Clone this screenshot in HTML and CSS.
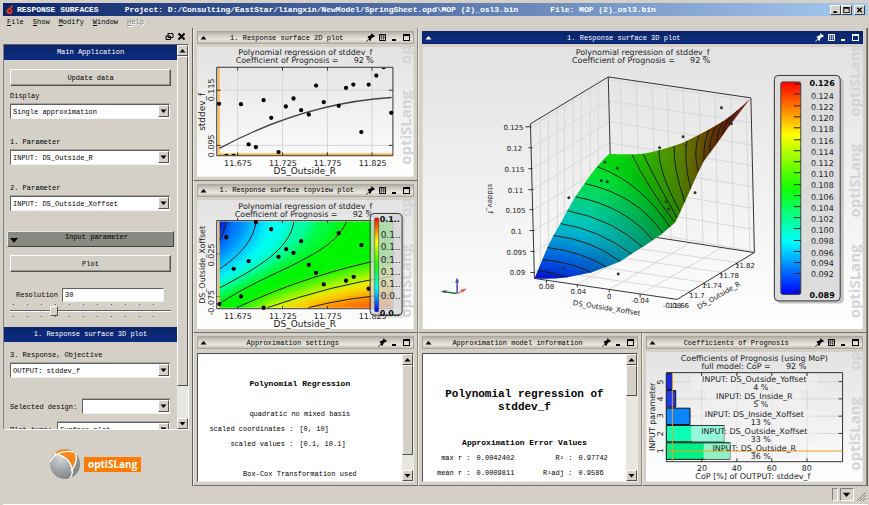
FILE: index.html
```html
<!DOCTYPE html>
<html lang="en">
<head>
<meta charset="utf-8">
<title>RESPONSE SURFACES</title>
<link rel="stylesheet" href="styles.css">
</head>
<body>
<svg class="defs" width="0" height="0" aria-hidden="true">
  <defs>
    <symbol id="pin" viewBox="0 0 9 9"><path d="M5 0l4 3-1 1h-1l-2 2v1l-1 1-1.500-1.500L1 8.500 0 9l.5-1L3 5.500 1.500 4l1-1h1l2-1.500z"/></symbol>
    <symbol id="table" viewBox="0 0 9 9"><path d="M1.500 1.500h6v6h-6z" fill="none" stroke="currentColor"/><path d="M1 3h7M1 5h7M3.500 1v7M5.500 1v7" fill="none" stroke="currentColor" stroke-width=".5"/></symbol>
    <symbol id="min" viewBox="0 0 9 9"><path d="M2 6h4v2H2z"/></symbol>
    <symbol id="max" viewBox="0 0 9 9"><path d="M1 1h7v7H1zM2 3v4h5V3z" fill-rule="evenodd"/></symbol>
    <symbol id="up" viewBox="0 0 9 9"><path d="M1.500 6.500L4.500 3l3 3.500z"/></symbol>
    <symbol id="down" viewBox="0 0 9 9"><path d="M1.500 3h6l-3 3.500z"/></symbol>
    <linearGradient id="paper" x1="0" y1="0" x2="0" y2="1"><stop offset="0" stop-color="#e2e2e2"/><stop offset="1" stop-color="#fff"/></linearGradient>
    <linearGradient id="rainbow" x1="0" y1="0" x2="0" y2="1"><stop offset="0" stop-color="#f00"/><stop offset=".25" stop-color="#ff0"/><stop offset=".5" stop-color="#1f0"/><stop offset=".75" stop-color="#0ff"/><stop offset="1" stop-color="#00f"/></linearGradient>
    <radialGradient id="ball" cx=".35" cy=".3" r=".8"><stop offset="0" stop-color="#d4d6d8"/><stop offset="1" stop-color="#75797d"/></radialGradient>
  </defs>
</svg>

<header class="titlebar">
  <svg class="app-icon" viewBox="0 0 9 11" aria-hidden="true"><path d="M7 0L4 3C1 4 0 6 1 9c2 2 5 2 6-1 1-2 0-4-2-4l3-2z" fill="#e03a20"/><path d="M3 5h2v3H3z" fill="#7a1010"/></svg>
  <h1>RESPONSE SURFACES</h1>
  <span class="project">Project: D:/Consulting/EastStar/liangxin/NewModel/SpringSheet.opd\MOP (2)_osl3.bin</span>
  <span class="file">File: MOP (2)_osl3.bin</span>
  <div class="window-buttons">
    <button aria-label="Minimize"><svg viewBox="0 0 9 9"><use href="#min"/></svg></button>
    <button aria-label="Maximize"><svg viewBox="0 0 9 9"><use href="#max"/></svg></button>
    <button aria-label="Close"><svg viewBox="0 0 9 9"><path d="M2 2l5 5M7 2L2 7" stroke="#000" stroke-width="1.500"/></svg></button>
  </div>
</header>
<nav class="menubar">
  <button><u>F</u>ile</button><button><u>S</u>how</button><button><u>M</u>odify</button><button><u>W</u>indow</button><button disabled><u>H</u>elp</button>
</nav>

<div class="workspace">
  <aside class="sidebar">
    <div class="dock-tools">
      <button aria-label="Float"><svg viewBox="0 0 9 9"><path d="M3 1.500h5v4H3zM1 4h4.500v3.500H1z" fill="#d4d0c8" stroke="#000"/></svg></button>
      <button aria-label="Close panel"><svg viewBox="0 0 9 9"><path d="M1.500 1.500l6 6M7.500 1.500l-6 6" stroke="#000" stroke-width="2"/></svg></button>
    </div>
    <div class="scroller">
      <form class="controls">
        <h2 class="band">Main Application</h2>
        <button type="button" class="push">Update data</button>
        <div class="field"><label for="display">Display</label><span class="combo"><select id="display"><option>Single approximation</option></select><svg viewBox="0 0 9 9"><use href="#down"/></svg></span></div>
        <div class="field"><label for="p1">1. Parameter</label><span class="combo"><select id="p1"><option>INPUT: DS_Outside_R</option></select><svg viewBox="0 0 9 9"><use href="#down"/></svg></span></div>
        <div class="field"><label for="p2">2. Parameter</label><span class="combo"><select id="p2"><option>INPUT: DS_Outside_Xoffset</option></select><svg viewBox="0 0 9 9"><use href="#down"/></svg></span></div>
        <button type="button" class="fold"><svg viewBox="0 0 9 9"><use href="#down"/></svg><span>Input parameter</span></button>
        <button type="button" class="push">Plot</button>
        <div class="resolution"><label for="res">Resolution</label><input id="res" type="text" value="30"></div>
        <div class="slider"><div class="ticks"></div><input type="range" aria-label="Resolution" min="0" max="100" value="26"><div class="ticks"></div></div>
        <h2 class="band second">1. Response surface 3D plot</h2>
        <div class="field response"><label for="resp">3. Response, Objective</label><span class="combo"><select id="resp"><option>OUTPUT: stddev_f</option></select><svg viewBox="0 0 9 9"><use href="#down"/></svg></span></div>
        <div class="inline-field"><label for="design">Selected design:</label><span class="combo"><select id="design"><option></option></select><svg viewBox="0 0 9 9"><use href="#down"/></svg></span></div>
        <div class="inline-field"><label for="ptype">Plot type:</label><span class="combo"><select id="ptype"><option>Surface plot</option></select><svg viewBox="0 0 9 9"><use href="#down"/></svg></span></div>
      </form>
      <div class="scrollbar"><svg viewBox="0 0 9 9"><use href="#up"/></svg><i class="thumb side-thumb"></i><svg viewBox="0 0 9 9"><use href="#down"/></svg></div>
    </div>
    <div class="brand">
      <svg viewBox="0 0 30 30" aria-hidden="true"><circle cx="15" cy="15" r="15" fill="url(#ball)"/><path d="M4 5C9-1 19-1 25 4c3 5 1 12-3 16C20 11 14 6 4 5z" fill="#ff8418"/><path d="M0 13C4 5 12 1 24 3M4 5c10 1 16 6 18 15 1 4 0 7-2 9M25 4c3 7 0 13-4 18" fill="none" stroke="#fff" stroke-width="1.300"/></svg>
      <strong>optiSLang</strong>
    </div>
  </aside>

  <main class="docks">
    <section class="dock">
      <header><svg viewBox="0 0 9 9"><use href="#up"/></svg><h2>1. Response surface 2D plot</h2><span class="tools"><svg viewBox="0 0 9 9"><use href="#pin"/></svg><svg viewBox="0 0 9 9"><use href="#table"/></svg><svg viewBox="0 0 9 9"><use href="#min"/></svg><svg viewBox="0 0 9 9"><use href="#max"/></svg></span></header>
      <svg class="plot" viewBox="197 47 217 130">
        <rect x="197" y="47" width="217" height="130" fill="url(#paper)"/>
        <g class="mark"><text transform="translate(411 165) rotate(-90)">optiSLang</text><text transform="translate(411 64) rotate(-90)">optiSLang</text></g>
        <g transform="translate(190 28) scale(.3333)">
          <path class="grid" d="M143 118v266M278 118v266M413 118v266M547 118v266M80 187h530M80 353h530"/>
          <path d="M86 120v260h524" fill="none" stroke="#ffb84a" stroke-width="6"/>
          <path class="frame" d="M80 118h530v266H80zM143 118v10M278 118v10M413 118v10M547 118v10M143 384v-10M278 384v-10M413 384v-10M547 384v-10M80 187h12M80 353h12M610 187h-12M610 353h-12"/>
          <path d="M88 362Q340 226 606 209" fill="none" stroke="#444" stroke-width="4"/>
          <path class="dots" d="M87 228h0M153 229h0M176 350h0M198 358h0M221 217h0M244 270h0M266 373h0M288 236h0M311 212h0M334 247h0M357 260h0M379 173h0M402 223h0M447 234h0M469 180h0M491 170h0M515 313h0M537 170h0M560 143h0M605 255h0"/>
          <path d="M102 382q7-8 14 0zM124 382q7-8 14 0zM575 120q7 8 14 0z"/>
        </g>
        <g class="head"><text x="305.500" y="55">Polynomial regression of stddev_f</text><text x="305" y="63.500" xml:space="preserve">Coefficient of Prognosis =      92 %</text></g>
        <g class="tick"><text x="238" y="166">11.675</text><text x="283" y="166">11.725</text><text x="328" y="166">11.775</text><text x="373" y="166">11.825</text>
        <text transform="translate(214 90) rotate(-90)">0.115</text><text transform="translate(214 146) rotate(-90)">0.095</text></g>
        <g class="axis"><text x="305" y="174">DS_Outside_R</text><text transform="translate(205 112) rotate(-90)">stddev_f</text></g>
      </svg>
    </section>

    <section class="dock wide active">
      <header><svg viewBox="0 0 9 9"><use href="#up"/></svg><h2>1. Response surface 3D plot</h2><span class="tools"><svg viewBox="0 0 9 9"><use href="#pin"/></svg><svg viewBox="0 0 9 9"><use href="#table"/></svg><svg viewBox="0 0 9 9"><use href="#min"/></svg><svg viewBox="0 0 9 9"><use href="#max"/></svg></span></header>
      <svg class="plot" viewBox="421 47 441 283">
        <defs>
          <clipPath id="sheet"><path d="M533 279L541 260 546 248 552 236 559 224 566 211 574 197 583 184Q596 165 608 154Q628 155 642 154Q660 151 682 143Q705 132 723 121Q738 110 749 99L740 111 727 128 715 145 703 161 696 175 687 195 678 215 674 223 660 235 642 247 631 254 619 262 606 267 590 273 565 278Q550 280 533 279z"/></clipPath>
          <filter id="soft" x="-20%" y="-20%" width="140%" height="140%"><feGaussianBlur stdDeviation="4"/></filter>
          <linearGradient id="shade" gradientUnits="userSpaceOnUse" x1="580" y1="180" x2="680" y2="226"><stop offset=".2" stop-color="#000" stop-opacity="0"/><stop offset="1" stop-color="#000" stop-opacity=".36"/></linearGradient>
        </defs>
        <rect x="421" y="47" width="441" height="283" fill="url(#paper)"/>
        <g class="mark"><text transform="translate(859 117) rotate(-90)">optiSLang</text><text transform="translate(859 218) rotate(-90)">optiSLang</text><text transform="translate(859 319) rotate(-90)">optiSLang</text></g>
        <path class="mesh" d="M539 118v157M547 113v157M556 108v157M563 104v156M572 98v157M580 93v157M589 88v157M597 83v156
          M530 127L607 80 750 101M530 148L607 101 751 123M531 169L608 122 751 145M531 190L608 143 752 166M532 210L609 164 752 187M532 231L610 185 753 209M533 252L611 206 753 230M533 273L612 227 753 252
          M619 79l4 154M635 81l4 154M651 83l4 155M666 86l4 154M682 88l4 154M698 90l4 155M714 93l3 154M730 95l3 154M745 97l4 155
          M545 281L624 233M576 285L657 238M608 290L690 243M639 295L721 248M546 271L690 292M561 262L704 283M577 252L721 273M592 243L737 263"/>
        <path d="M529 124L607 77 750 98 753.500 253 676 300 533 279zM607 77L609 156M656 238L753 253M524 127h6M527 148h4M527 169h4M527 190h5M528 210h4M528 231h5M529 252h4M529 273h4M545 281v3M576 285v3M608 290v3M639 295v3M688 293l3 2M703 284l3 2M719 274l3 2M735 264l3 2" fill="none" stroke="#333"/>
        <g clip-path="url(#sheet)">
          <g filter="url(#soft)">
            <path fill="#b03020" d="M480 60h320v280H480z"/>
            <path fill="#982c08" d="M733 114L727 126V340H480V114z"/>
            <path fill="#8c4a00" d="M722 121L716 143V340H480V121z"/>
            <path fill="#907000" d="M708 130L703 161V340H480V130z"/>
            <path fill="#889000" d="M698 136Q693 151 697 171V340H480V136z"/>
            <path fill="#74a400" d="M686 141Q682 160 690 190V340H480V141z"/>
            <path fill="#5cb800" d="M673 146Q674 170 685 203V340H480V146z"/>
            <path fill="#36c400" d="M658 151Q659 172 679 212V340H480V151z"/>
            <path fill="#18d000" d="M640 150L652 183 674 217V340H480V150z"/>
            <path fill="#00d80c" d="M625 150L648 190 672 226V340H480V150z"/>
            <path fill="#00e030" d="M596 167Q640 183 670 229V340H480V167z"/>
            <path fill="#00d860" d="M584 184Q635 195 662 234V340H480V184z"/>
            <path fill="#00ce90" d="M574 197Q625 207 652 241V340H480V197z"/>
            <path fill="#00c8b8" d="M566 211Q612 220 642 248V340H480V211z"/>
            <path fill="#00b4cc" d="M559 224Q598 230 631 255V340H480V224z"/>
            <path fill="#0090d4" d="M552 236Q590 240 619 262V340H480V236z"/>
            <path fill="#0068dc" d="M546 248Q580 252 606 268V340H480V248z"/>
            <path fill="#0040dc" d="M541 260Q570 263 590 273V340H480V260z"/>
            <path fill="#0010c8" d="M536 271Q560 274 567 278V340H480V271z"/>
          </g>
          <path d="M500 60h280v260H500z" fill="url(#shade)"/>
          <path class="contour" d="M536 271Q552 273 567 278M541 260Q570 263 590 273M546 248Q580 252 606 268M552 236Q590 240 619 262M559 224Q598 230 631 255M566 211Q612 220 642 248M574 197Q625 207 652 241M584 184Q635 195 662 234M596 167Q640 183 670 229M631 155Q645 185 673 222M642 154Q655 182 676 218M658 150Q657 172 679 212M673 146Q672 168 684 203M686 141Q682 160 690 190M698 136Q692 151 697 171M708 130Q702 143 703 161M715 126Q708 139 709 153M722 121Q716 132 716 143M729 117Q722 127 722 134M736 111Q729 118 728 126"/>
        </g>
        <path class="dots small" d="M603.500 162.500h0M616 168.500h0M600 181h0M606 182h0M720.500 108h0M730.500 124h0M682 137h0M685 145.500h0M658.500 148h0M567.500 198h0M562 268.500h0M617 274.500h0M694 193h0M665 202h0M667.500 209.500h0"/>
        <g fill="none" stroke-width="1.500"><path d="M455.500 294v-14" stroke="#4848c8"/><path d="M455 294l-14-2" stroke="#207820"/><path d="M456 294l8-4" stroke="#e07070"/></g>
        <path d="M453.500 283l2-5 2 5zM445 290.500l-6 1.300 5 2z" fill="#406080"/><path d="M459 290l6-1-4 4z" fill="#e06060"/>
        <rect x="776" y="78" width="67" height="226" rx="4" fill="#c4c4c4"/>
        <rect x="773.500" y="75.500" width="66" height="226" rx="4" fill="#dcdcdc" stroke="#333"/>
        <rect x="780" y="82" width="20" height="213" rx="2" fill="url(#rainbow)" stroke="#444"/>
        <path d="M793 84h7M793 94h7M793 106h7M793 117h7M793 128h7M793 140h7M793 151h7M793 162h7M793 173h7M793 185h7M793 196h7M793 207h7M793 218h7M793 229h7M793 241h7M793 252h7M793 263h7M793 274h7M793 292h7" stroke="#222"/>
        <g class="legend"><text class="strong" x="834" y="86">0.126</text><text x="833" y="99">0.124</text><text x="833" y="110">0.122</text><text x="833" y="121">0.120</text><text x="833" y="132">0.118</text><text x="833" y="144">0.116</text><text x="833" y="155">0.114</text><text x="833" y="166">0.112</text><text x="833" y="177">0.110</text><text x="833" y="188">0.108</text><text x="833" y="200">0.106</text><text x="833" y="211">0.104</text><text x="833" y="222">0.102</text><text x="833" y="233">0.100</text><text x="833" y="244">0.098</text><text x="833" y="256">0.096</text><text x="833" y="267">0.094</text><text x="833" y="278">0.092</text><text class="strong" x="834" y="299">0.089</text></g>
        <g class="head"><text x="641.500" y="55">Polynomial regression of stddev_f</text><text x="640" y="63.500" xml:space="preserve">Coefficient of Prognosis =      92 %</text></g>
        <g class="tiny"><text x="512" y="130">0.125</text><text x="513" y="151">0.12</text><text x="513" y="172">0.115</text><text x="514" y="193">0.11</text><text x="514" y="213">0.105</text><text x="515" y="234">0.1</text><text x="515" y="255">0.095</text><text x="516" y="276">0.09</text>
        <text x="545" y="290">0.08</text><text x="577" y="295">0.04</text><text x="608" y="300">0</text><text x="639" y="304">-0.04</text><text x="671" y="309">-0.08</text><text x="678" y="309">11.66</text><text x="696" y="299">11.7</text><text x="711" y="289">11.74</text><text x="728" y="279">11.78</text><text x="744" y="269">11.82</text>
        <text transform="translate(605 311) rotate(9)">DS_Outside_Xoffset</text><text transform="translate(719 298) rotate(-30)">DS_Outside_R</text><text transform="translate(486 199) rotate(90)">stddev_f</text></g>
      </svg>
    </section>

    <section class="dock">
      <header><svg viewBox="0 0 9 9"><use href="#up"/></svg><h2>1. Response surface topview plot</h2><span class="tools"><svg viewBox="0 0 9 9"><use href="#pin"/></svg><svg viewBox="0 0 9 9"><use href="#table"/></svg><svg viewBox="0 0 9 9"><use href="#min"/></svg><svg viewBox="0 0 9 9"><use href="#max"/></svg></span></header>
      <svg class="plot" viewBox="197 200 217 130">
        <defs>
          <clipPath id="map"><path d="M88 125h518v259H88z"/></clipPath>
          <filter id="softer" x="-10%" y="-10%" width="120%" height="120%"><feGaussianBlur stdDeviation="14"/></filter>
        </defs>
        <rect x="197" y="200" width="217" height="130" fill="url(#paper)"/>
        <g class="mark"><text transform="translate(411 318) rotate(-90)">optiSLang</text><text transform="translate(411 217) rotate(-90)">optiSLang</text></g>
        <g transform="translate(190 180) scale(.3333)">
          <g clip-path="url(#map)">
            <g filter="url(#softer)">
              <path fill="#00f500" d="M0 0h720v500H0z"/>
              <path fill="#00fb40" d="M440 0V125Q410 200 280 260Q180 310 0 390V0z"/>
              <path fill="#00ffa8" d="M370 0V125Q330 210 220 265Q140 310 0 370V0z"/>
              <path fill="#00fff0" d="M300 0V125Q270 210 180 262Q120 300 0 350V0z"/>
              <path fill="#00c4ff" d="M225 0V125Q210 210 110 272L0 330V0z"/>
              <path fill="#0084ff" d="M175 0V125Q160 200 88 240L0 280V0z"/>
              <path fill="#0030e8" d="M125 0V125Q118 160 88 200L0 240V0z"/>
              <path fill="#0010c0" d="M100 0V125Q98 140 88 155L0 190V0z"/>
              <path fill="#80f800" d="M720 215L606 255Q380 295 180 384V500H720z"/>
              <path fill="#f4f400" d="M720 250L606 283Q450 312 232 384V500H720z"/>
              <path fill="#ffc000" d="M720 280L606 312Q430 335 285 384V500H720z"/>
              <path fill="#ff7800" d="M720 310L606 340Q470 352 360 390V500H720z"/>
              <path fill="#ff3c00" d="M720 340L606 368Q540 374 470 400V500H720z"/>
            </g>
            <path class="contour heavy" d="M108 125Q106 150 88 182M198 125Q190 200 88 268M312 125C300 210 200 265 88 325M470 125C430 230 240 270 88 372M606 232C430 270 300 310 140 384M606 290Q430 315 232 384M606 345Q480 352 355 384"/>
          </g>
          <path class="frame" d="M80 122h530v265H80zM143 122v-8M278 122v8M413 122v8M143 387v-8M278 387v-8M413 387v-8M80 222h10M80 350h10"/>
          <path d="M86 125v259" stroke="#ffb84a" stroke-width="4"/>
          <path class="dots" d="M109 172h0M131 267h0M153 350h0M176 244h0M198 127h0M244 148h0M266 231h0M289 208h0M311 219h0M334 184h0M357 255h0M379 279h0M402 314h0M447 160h0M469 303h0M492 291h0M515 196h0M537 327h0M88 373h0M221 384h0"/>
        </g>
        <g class="head"><text x="305.500" y="209">Polynomial regression of stddev_f</text><text x="304" y="217" xml:space="preserve">Coefficient of Prognosis =      92 %</text></g>
        <g class="tick"><text x="238" y="319">11.675</text><text x="283" y="319">11.725</text><text x="328" y="319">11.775</text><text x="373" y="319">11.825</text>
        <text transform="translate(214 255) rotate(-90)">0.025</text><text transform="translate(214 303) rotate(-90)">-0.075</text></g>
        <g class="axis"><text x="305" y="327">DS_Outside_R</text></g>
        <g class="head"><text transform="translate(205 265) rotate(-90)">DS_Outside_Xoffset</text></g>
        <rect x="373" y="215" width="32" height="103" rx="4" fill="#999" fill-opacity=".3"/>
        <rect x="370.500" y="213.500" width="32" height="102" rx="4" fill="#dcdcdc" fill-opacity=".72" stroke="#333"/>
        <rect x="375" y="218" width="4" height="94" rx="1" fill="url(#rainbow)" stroke="#333" stroke-width=".5"/>
        <g class="legend short"><text class="strong" x="380" y="222">0.1..</text><text x="381" y="238">0.1..</text><text x="381" y="250">0.1..</text><text x="381" y="263">0.1..</text><text x="381" y="275">0.1..</text><text x="381" y="287">0.1..</text><text x="381" y="299">0.0..</text><text class="strong" x="380" y="316">0.0..</text></g>
      </svg>
    </section>

    <section class="dock">
      <header><svg viewBox="0 0 9 9"><use href="#up"/></svg><h2>Approximation settings</h2><span class="tools"><svg viewBox="0 0 9 9"><use href="#pin"/></svg><svg viewBox="0 0 9 9"><use href="#min"/></svg><svg viewBox="0 0 9 9"><use href="#max"/></svg></span></header>
      <div class="pane">
        <div class="doc">
          <h3>Polynomial Regression</h3>
          <p>quadratic no mixed basis</p>
          <dl><dt>scaled coordinates :</dt><dd>[0, 10]</dd><dt>scaled values :</dt><dd>[0.1, 10.1]</dd></dl>
          <p>Box-Cox Transformation used</p>
        </div>
        <div class="scrollbar"><svg viewBox="0 0 9 9"><use href="#up"/></svg><i class="thumb tall-thumb"></i><svg viewBox="0 0 9 9"><use href="#down"/></svg></div>
      </div>
    </section>

    <section class="dock">
      <header><svg viewBox="0 0 9 9"><use href="#up"/></svg><h2>Approximation model information</h2><span class="tools"><svg viewBox="0 0 9 9"><use href="#pin"/></svg><svg viewBox="0 0 9 9"><use href="#min"/></svg><svg viewBox="0 0 9 9"><use href="#max"/></svg></span></header>
      <div class="pane">
        <div class="doc model">
          <h3 class="large">Polynomial regression of stddev_f</h3>
          <h3>Approximation Error Values</h3>
          <table><tr><th>max r :</th><td>0.0042402</td><th>R² :</th><td>0.97742</td></tr><tr><th>mean r :</th><td>0.0009811</td><th>R²adj :</th><td>0.9586</td></tr></table>
        </div>
        <div class="scrollbar"><svg viewBox="0 0 9 9"><use href="#up"/></svg><i class="thumb short-thumb"></i><svg viewBox="0 0 9 9"><use href="#down"/></svg></div>
      </div>
    </section>

    <section class="dock">
      <header><svg viewBox="0 0 9 9"><use href="#up"/></svg><h2>Coefficients of Prognosis</h2><span class="tools"><svg viewBox="0 0 9 9"><use href="#pin"/></svg><svg viewBox="0 0 9 9"><use href="#table"/></svg><svg viewBox="0 0 9 9"><use href="#min"/></svg><svg viewBox="0 0 9 9"><use href="#max"/></svg></span></header>
      <svg class="plot" viewBox="645 353 217 130">
        <rect x="645" y="353" width="217" height="130" fill="url(#paper)"/>
        <g class="mark"><text transform="translate(859 472) rotate(-90)">optiSLang</text><text transform="translate(859 371) rotate(-90)">optiSLang</text></g>
        <g transform="translate(640 335) scale(.3333)">
          <path class="grid" d="M182 116v268M288 116v268M393 116v268M499 116v268M76 143h530M76 195h530M76 247h530M76 299h530"/>
          <g stroke="#111" stroke-width="3"><path fill="#1428f0" d="M76 119h17v48H76z"/><path fill="#1a3cf0" d="M76 170h28v50H76z"/><path fill="#0a84ff" d="M76 223h71v49H76z"/><path fill="#0cffb4" d="M76 275h174v49H76z"/><path fill="#00f088" d="M76 327h192v50H76z"/></g>
          <g fill="#f2f2f2" fill-opacity=".6"><rect x="150" y="122" width="380" height="47" rx="6"/><rect x="196" y="173" width="286" height="48" rx="6"/><rect x="160" y="225" width="360" height="47" rx="6"/><rect x="150" y="276" width="380" height="48" rx="6"/><rect x="188" y="329" width="302" height="48" rx="6"/></g>
          <path class="frame" d="M76 116h530v268H76zM182 116v10M288 116v10M393 116v10M499 116v10M182 384v-10M288 384v-10M393 384v-10M499 384v-10M606 143h-12M606 195h-12M606 247h-12M606 299h-12"/>
          <path d="M94 118v264M78 352h528" stroke="#f0a020" stroke-width="3"/>
        </g>
        <g class="head"><text x="753.500" y="362">Coefficients of Prognosis (using MoP)</text><text x="753" y="370" xml:space="preserve">full model: CoP =      92 %</text>
        <text x="753.500" y="383">INPUT: DS_Outside_Yoffset</text><text x="760" y="391">4 %</text><text x="753.500" y="400">INPUT: DS_Inside_R</text><text x="760" y="408">5 %</text><text x="753.500" y="418">INPUT: DS_Inside_Xoffset</text><text x="760" y="426">13 %</text><text x="753.500" y="435">INPUT: DS_Outside_Xoffset</text><text x="760" y="443">33 %</text><text x="753.500" y="452">INPUT: DS_Outside_R</text><text x="760" y="460">36 %</text>
        <text x="752" y="480">CoP [%] of OUTPUT: stddev_f</text><text transform="translate(654 418) rotate(-90)">INPUT parameter</text></g>
        <g class="tick"><text x="701" y="472">20</text><text x="736" y="472">40</text><text x="771" y="472">60</text><text x="806" y="472">80</text>
        <text transform="translate(662 383) rotate(-90)">5</text><text transform="translate(662 400) rotate(-90)">4</text><text transform="translate(662 417) rotate(-90)">3</text><text transform="translate(662 435) rotate(-90)">2</text><text transform="translate(662 452) rotate(-90)">1</text></g>
      </svg>
    </section>
  </main>
</div>
<footer class="statusbar">
  <i class="well"></i>
  <button aria-label="More"><svg viewBox="0 0 9 9"><use href="#down"/></svg></button>
  <svg class="grip" viewBox="0 0 10 10" aria-hidden="true"><path d="M1 10l9-9M4 10l6-6M7 10l3-3" stroke="#808080"/></svg>
</footer>
</body>
</html>
```
FILE: styles.css
```css
* { box-sizing: border-box; }

body {
  margin: 0;
  height: 100vh;
  padding: 3px 1px 0 3px;
  display: flex;
  flex-direction: column;
  background: #d4d0c8;
  color: #000;
  font: 7px/10px "Liberation Mono", monospace;
  overflow: hidden;
}

h1, h2, h3, p, dl, dd { margin: 0; font: inherit; }
button, input, select { margin: 0; padding: 0; font: inherit; color: inherit; border: 0; border-radius: 0; }
svg { display: block; }
.defs { position: absolute; }

/* window chrome */
.titlebar {
  display: flex;
  align-items: center;
  flex: 0 0 13px;
  padding: 0 3px;
  background: linear-gradient(90deg, #0a246a, #a6caf0);
  color: #fff;
  font-size: 8px;
  font-weight: bold;
  white-space: nowrap;
}
.titlebar h1 { margin: 0 26px 0 3px; }
.app-icon { width: 8px; height: 10px; }
.project { margin-right: 32px; }
.window-buttons { display: flex; margin-left: auto; }
.window-buttons button {
  width: 11px;
  height: 10px;
  background: #d4d0c8;
  border: 1px solid;
  border-color: #fff #404040 #404040 #fff;
}
.window-buttons button:last-child { margin-left: 2px; }
.window-buttons svg { width: 9px; height: 8px; }

.menubar { display: flex; gap: 9px; flex: 0 0 12px; padding: 0 4px; }
.menubar button { background: none; }
.menubar button:disabled { color: #808080; text-shadow: 1px 1px #fff; }

.workspace { flex: 1 1 0; display: flex; min-height: 0; }

/* left dock */
.sidebar { flex: 0 0 187px; display: flex; flex-direction: column; }
.dock-tools { display: flex; justify-content: flex-end; align-items: center; gap: 3px; flex: 0 0 16px; padding-right: 4px; }
.dock-tools button { background: none; width: 9px; height: 9px; }

.scroller {
  flex: 1 1 0;
  min-height: 0;
  display: flex;
  margin-right: 1px;
  border: 1px solid;
  border-color: #606060 #fff #fff #808080;
  overflow: hidden;
}
.controls { flex: 1; overflow: hidden; }

.band {
  height: 15px;
  line-height: 14px;
  text-align: center;
  color: #fff;
  background: linear-gradient(#0a246a, #0c2d80);
}
.push {
  display: block;
  width: calc(100% - 12px);
  height: 17px;
  margin: 9px 6px 0;
  background: #d4d0c8;
  border: 1px solid;
  border-color: #fff #505050 #505050 #fff;
  box-shadow: inset -1px -1px #9a968e;
}
.field { display: flex; flex-direction: column; gap: 3px; margin: 5px 7px 18px 6px; }
.combo { display: flex; flex: 1; position: relative; height: 15px; }
.combo select {
  appearance: none;
  width: 100%;
  height: 15px;
  padding: 0 14px 0 2px;
  background: #fff;
  border: 1px solid;
  border-color: #606060 #f4f2ee #f4f2ee #606060;
  box-shadow: 0 -1px #a8a49c;
}
.combo svg {
  position: absolute;
  right: 1px;
  top: 1px;
  width: 11px;
  height: 12px;
  background: #d4d0c8;
  border: 1px solid;
  border-color: #fff #505050 #505050 #fff;
  pointer-events: none;
}
.fold {
  display: flex;
  align-items: flex-end;
  width: calc(100% - 6px);
  height: 16px;
  margin: 20px 3px 0;
  background: #8a8882;
  border: 1px solid;
  border-color: #e8e6e0 #404040 #404040 #e8e6e0;
}
.fold svg { width: 12px; height: 12px; }
.fold span { flex: 1; align-self: flex-start; }
.fold + .push { margin-top: 8px; }

.resolution { display: flex; align-items: center; gap: 4px; margin: 16px 13px 0 12px; }
.resolution input {
  flex: 1;
  min-width: 0;
  height: 14px;
  padding: 0 2px;
  background: #fff;
  border: 1px solid;
  border-color: #606060 #f4f2ee #f4f2ee #606060;
}
.slider { margin: 2px 6px 10px; }
.ticks { height: 1px; margin: 0 9px 0 3px; background: repeating-linear-gradient(90deg, #555 0 1px, transparent 1px 14px); }
.slider input { appearance: none; display: block; width: 100%; height: 11px; background: linear-gradient(#d4d0c8 5px, #606060 5px, #606060 6px, #fff 6px, #fff 7px, #d4d0c8 7px); }
.slider input::-webkit-slider-thumb {
  appearance: none;
  width: 8px;
  height: 10px;
  background: #d4d0c8;
  border: 1px solid;
  border-color: #fff #505050 #505050 #fff;
}
.response { margin-top: 8px; margin-bottom: 21px; }
.inline-field { display: flex; align-items: center; gap: 5px; margin: 0 7px 8px 6px; }

.brand { display: flex; align-items: center; gap: 4px; flex: 0 0 56px; padding: 12px 0 0 47px; }
.brand svg { width: 30px; height: 30px; }
.brand strong { padding: 0 4px; background: #ff7a00; color: #fff; font: bold 10px/15px "Open Sans", sans-serif; }

/* scroll bars */
.scrollbar {
  flex: 0 0 11px;
  display: flex;
  flex-direction: column;
  background: #e8e6e1;
}
.scrollbar svg, .thumb {
  width: 11px;
  height: 11px;
  flex: 0 0 11px;
  background: #d4d0c8;
  border: 1px solid;
  border-color: #fff #505050 #505050 #fff;
}
.scrollbar svg:last-child { margin-top: auto; }
.scrollbar .side-thumb { flex: 0 1 86%; }
.scrollbar .tall-thumb { flex: 0 1 71%; }
.scrollbar .short-thumb { flex: 0 1 24%; }

/* plot docks */
.docks {
  flex: 1;
  min-width: 0;
  margin-left: 2px;
  display: grid;
  grid-template-columns: repeat(3, minmax(0, 1fr));
  grid-template-rows: repeat(3, minmax(0, 1fr));
  border: solid #606060;
  border-width: 0 1px 0 1px;
}
.dock {
  display: flex;
  flex-direction: column;
  gap: 3px;
  min-height: 0;
  padding: 3px;
  border: 1px solid;
  border-color: transparent #8a8780 #707070 #eceae4;
  border-top: 0;
}
.dock.wide { grid-column: span 2; grid-row: span 2; }
.dock header {
  display: flex;
  align-items: center;
  flex: 0 0 13px;
  padding: 0 2px 0 1px;
  background: linear-gradient(#b4b0a6, #d0ccc2 30%, #e8e6e0 70%, #c4c0b6);
  border: 1px solid #aaa69c;
}
.dock.active header { background: linear-gradient(#0a246a, #0c2d80); border-color: #0a246a; color: #fff; }
.dock header h2 { flex: 1; text-align: center; white-space: nowrap; }
.dock header svg { width: 9px; height: 9px; fill: currentColor; }
.tools { display: flex; gap: 3px; }
.plot { flex: 1 1 0; min-height: 0; width: 100%; }

.plot text { font-family: "DejaVu Sans", sans-serif; fill: #222; text-anchor: middle; }
.head text, .tick text { font-size: 8px; }
.axis text { font-size: 9px; }
.tiny text { font-size: 7px; }
.plot .legend text { font-size: 8px; text-anchor: end; }
.plot .legend.short text { font-size: 9px; text-anchor: start; }
.plot .legend .strong { font-weight: bold; fill: #000; }
.plot .legend.short .strong { font-size: 8px; }
.plot .mark text { font: bold 15px "Open Sans", sans-serif; fill: #d4d4d4; text-anchor: start; }
.grid { fill: none; stroke: #d6d6d6; stroke-width: 3; }
.mesh { fill: none; stroke: #d8d8d8; }
.frame { fill: none; stroke: #333; stroke-width: 3; }
.contour { fill: none; stroke: #102010; stroke-width: 1; }
.contour.heavy { stroke-width: 3; }
.dots { fill: none; stroke: #000; stroke-width: 13; stroke-linecap: round; }
.dots.small { stroke: #333; stroke-width: 3; }

/* report panes */
.pane {
  flex: 1 1 0;
  min-height: 0;
  display: flex;
  margin-top: 1px;
  background: #fff;
  border: 1px solid;
  border-color: #505050 #f0eee8 #f0eee8 #505050;
}
.doc { flex: 1; padding-top: 25px; overflow: hidden; text-align: center; }
.doc h3 { font-weight: bold; font-size: 8px; line-height: 10px; }
.doc p { margin-top: 20px; }
.doc h3 + p { margin-top: 20px; }
.doc dl { display: grid; grid-template-columns: 98fr 105fr; column-gap: 6px; row-gap: 5px; margin-top: 5px; }
.doc dt { text-align: right; }
.doc dd { text-align: left; }
.doc.model { padding-top: 34px; }
.doc h3.large { font-size: 11px; line-height: 13px; margin: 0 20px 24px; }
.doc table { width: 100%; border-collapse: collapse; margin-top: 5px; table-layout: fixed; }
.doc th { font-weight: normal; text-align: right; padding: 0 3px 5px 0; }
.doc td { text-align: left; padding: 0 0 5px 3px; }

.statusbar {
  display: flex;
  justify-content: flex-end;
  gap: 2px;
  flex: 0 0 18px;
  padding: 2px 2px 3px 0;
  border-bottom: 1px solid #fff;
}
.well { width: 6px; border: 1px solid; border-color: #808080 #fff #fff #808080; }
.statusbar button { width: 14px; background: #d4d0c8; border: 1px solid; border-color: #808080 #fff #fff #808080; }
.statusbar button svg { width: 11px; height: 11px; }
.grip { width: 10px; height: 10px; align-self: flex-end; }
```
